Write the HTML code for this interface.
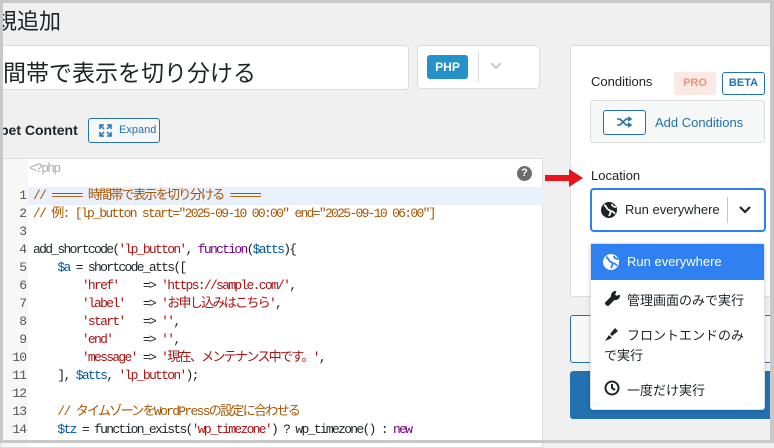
<!DOCTYPE html>
<html><head><meta charset="utf-8"><style>
*{box-sizing:border-box;margin:0;padding:0}
body{width:774px;height:443px;overflow:hidden;background:#f0f0f1;font-family:"Liberation Sans","Noto Sans CJK JP",sans-serif;position:relative;color:#1d2327}
.abs{position:absolute}
.frame{position:absolute;inset:0;border:3px solid #c8c8c8;border-right-width:4px;pointer-events:none;z-index:50}
.code{font-family:"Liberation Mono","Noto Sans CJK JP",monospace;font-size:13px;letter-spacing:-1.7px}
.ln{position:absolute;left:0;width:25px;height:18px;line-height:18px;text-align:right;color:#555;font-family:"Liberation Mono",monospace;font-size:13px;letter-spacing:-1px}
.cl{position:absolute;left:32px;height:18px;line-height:18px;white-space:pre}
.c{color:#aa5500}.s{color:#aa1111}.k{color:#770088}.v{color:#0055aa}
</style></head><body>
<div class="abs" style="left:-5px;top:4px;font-size:22px;">規追加</div>
<div class="abs" style="left:0;top:45px;width:409px;height:45px;background:#fff;border:1px solid #dcdcde;border-left:none;border-radius:0 4px 4px 0;font-size:23px;padding:8px 0 0 3px">間帯で表示を切り分ける</div>
<div class="abs" style="left:417px;top:45px;width:123px;height:44px;background:#fff;border:1px solid #dcdcde;border-radius:4px"></div>
<div class="abs" style="left:427px;top:55px;width:41px;height:24px;background:#2491c7;color:#fff;border-radius:3px;font-weight:bold;font-size:12px;text-align:center;line-height:24px">PHP</div>
<div class="abs" style="left:478px;top:52px;width:1px;height:30px;background:#dcdcde"></div>
<svg class="abs" style="left:490px;top:62px" width="12" height="8"><path d="M1 1l5 5 5-5" stroke="#c3c4c7" stroke-width="1.6" fill="none"/></svg>
<div class="abs" style="left:0;top:122px;font-size:14px;font-weight:bold;color:#1d2327">pet Content</div>
<div class="abs" style="left:88px;top:118px;width:72px;height:25px;border:1px solid #2271b1;border-radius:3px;background:#f6f7f7;font-size:11px;color:#2271b1;padding:5px 0 0 30px">Expand</div>
<svg class="abs" style="left:99px;top:124px" width="13" height="13" fill="none" stroke="#2271b1" stroke-width="1.5"><path d="M1 5V1h4M8 1h4v4M12 8v4H8M5 12H1V8M2 2l3 3M11 2L8 5M11 11L8 8M2 11l3-3"/></svg>
<div class="abs code" style="left:0;top:158px;width:543px;height:290px;background:#fff;border:1px solid #dcdcde">
<div class="abs" style="left:0;top:0;width:27px;height:100%;background:#f7f7f7"></div>
<div class="abs" style="left:27px;top:28px;width:515px;height:18px;background:#e8f0fc"></div>
<div class="abs" style="left:28px;top:1px;color:#aaa;line-height:18px">&lt;?php</div>
<div class="abs" style="left:516px;top:7px;width:15px;height:15px;border-radius:50%;background:#6d6d6d;color:#fff;font:bold 11px 'Liberation Sans';text-align:center;line-height:15px;letter-spacing:0">?</div>
<div style="position:absolute;left:0;top:28px">
<div class="ln" style="top:0">1</div><div class="cl c" style="top:0">// ===== 時間帯で表示を切り分ける =====</div>
<div class="ln" style="top:18px">2</div><div class="cl c" style="top:18px">// 例: [lp_button start="2025-09-10 00:00" end="2025-09-10 06:00"]</div>
<div class="ln" style="top:36px">3</div>
<div class="ln" style="top:54px">4</div><div class="cl" style="top:54px">add_shortcode(<span class="s">'lp_button'</span>, <span class="k">function</span>(<span class="v">$atts</span>){</div>
<div class="ln" style="top:72px">5</div><div class="cl" style="top:72px">    <span class="v">$a</span> = shortcode_atts([</div>
<div class="ln" style="top:90px">6</div><div class="cl" style="top:90px">        <span class="s">'href'</span>    =&gt; <span class="s">'https://sample.com/'</span>,</div>
<div class="ln" style="top:108px">7</div><div class="cl" style="top:108px">        <span class="s">'label'</span>   =&gt; <span class="s">'お申し込みはこちら'</span>,</div>
<div class="ln" style="top:126px">8</div><div class="cl" style="top:126px">        <span class="s">'start'</span>   =&gt; <span class="s">''</span>,</div>
<div class="ln" style="top:144px">9</div><div class="cl" style="top:144px">        <span class="s">'end'</span>     =&gt; <span class="s">''</span>,</div>
<div class="ln" style="top:162px">10</div><div class="cl" style="top:162px">        <span class="s">'message'</span> =&gt; <span class="s">'現在、メンテナンス中です。'</span>,</div>
<div class="ln" style="top:180px">11</div><div class="cl" style="top:180px">    ], <span class="v">$atts</span>, <span class="s">'lp_button'</span>);</div>
<div class="ln" style="top:198px">12</div>
<div class="ln" style="top:216px">13</div><div class="cl c" style="top:216px">    // タイムゾーンをWordPressの設定に合わせる</div>
<div class="ln" style="top:234px">14</div><div class="cl" style="top:234px">    <span class="v">$tz</span> = function_exists(<span class="s">'wp_timezone'</span>) ? wp_timezone() : <span class="k">new</span></div>
</div></div>
<div class="abs" style="left:570px;top:45px;width:205px;height:252px;background:#fff;border:1px solid #dcdcde;border-radius:3px"></div>
<svg class="abs" style="left:545px;top:168px;z-index:5" width="40" height="20"><path d="M0 7h24V1l14 9-14 9v-6H0z" fill="#e8141b"/></svg>
<div class="abs" style="left:591px;top:74px;font-size:13px">Conditions</div>
<div class="abs" style="left:674px;top:72px;width:42px;height:23px;background:#fbe9e5;color:#e8967c;font-size:11px;font-weight:bold;text-align:center;line-height:23px;border-radius:2px">PRO</div>
<div class="abs" style="left:722px;top:72px;width:43px;height:23px;border:1px solid #2271b1;color:#2271b1;font-size:11px;font-weight:bold;text-align:center;line-height:21px;border-radius:3px">BETA</div>
<div class="abs" style="left:590px;top:100px;width:175px;height:43px;background:#f6f7f7;border:1px solid #dcdcde;border-radius:3px"></div>
<div class="abs" style="left:603px;top:110px;width:43px;height:25px;border:1px solid #2271b1;border-radius:3px;background:#fff"></div>
<svg class="abs" style="left:617px;top:116px" width="15" height="12" fill="none" stroke="#2271b1" stroke-width="1.6"><path d="M0 3h3l6 6h5M0 9h3l6-6h5M11 1l3 2-3 2M11 7l3 2-3 2"/></svg>
<div class="abs" style="left:655px;top:115px;font-size:13px;color:#2271b1">Add Conditions</div>
<div class="abs" style="left:591px;top:168px;font-size:13px">Location</div>
<div class="abs" style="left:590px;top:188px;width:176px;height:44px;border:2px solid #2f7ff0;border-radius:4px;background:#fff"></div>
<svg class="abs" style="left:600px;top:201px" width="18" height="18"><circle cx="9" cy="9" r="8" fill="#1d2327"/><path d="M4 4c3 1 2 4 5 5s1 4 0 6M12 3c0 2 2 3 4 3M10 10c2 0 4 1 5 3" stroke="#fff" stroke-width="1.8" fill="none"/></svg>
<div class="abs" style="left:625px;top:202px;font-size:13px">Run everywhere</div>
<div class="abs" style="left:727px;top:197px;width:1px;height:26px;background:#c3c4c7"></div>
<svg class="abs" style="left:739px;top:206px" width="12" height="8"><path d="M1 1l5 5 5-5" stroke="#1d2327" stroke-width="2.2" fill="none"/></svg>
<div class="abs" style="left:570px;top:315px;width:205px;height:48px;border:1px solid #2271b1;border-radius:3px;background:#f6f7f7"></div>
<div class="abs" style="left:570px;top:371px;width:205px;height:48px;background:#2271b1;border-radius:3px"></div>
<div class="abs" style="left:590px;top:243px;width:175px;height:167px;background:#fff;border:1px solid #e0e0e0;border-radius:3px;box-shadow:0 1px 4px rgba(0,0,0,.15);font-size:13px">
<div style="position:absolute;left:0;top:0;width:100%;height:36px;background:#2f80f0"></div>
<svg class="abs" style="left:11px;top:9px" width="18" height="18"><circle cx="9" cy="9" r="8" fill="#fff"/><path d="M4 4c3 1 2 4 5 5s1 4 0 6M12 3c0 2 2 3 4 3M10 10c2 0 4 1 5 3" stroke="#2f80f0" stroke-width="1.8" fill="none"/></svg>
<div class="abs" style="left:36px;top:10px;color:#fff">Run everywhere</div>
<svg class="abs" style="left:13px;top:47px" width="16" height="16"><path d="M2 14l7-7M11 1a4 4 0 0 0-3 5l-6 6 2 2 6-6a4 4 0 0 0 5-3l-3 1-2-2z" stroke="#1d2327" stroke-width="2" fill="#1d2327"/></svg>
<div class="abs" style="left:36px;top:46px">管理画面のみで実行</div>
<svg class="abs" style="left:13px;top:82px" width="16" height="16"><path d="M1 15l4-6 3 3zM6 8l5-6 3 3-6 5z" fill="#1d2327"/></svg>
<div class="abs" style="left:36px;top:82px;width:130px;line-height:20px">フロントエンドのみ</div>
<div class="abs" style="left:13px;top:102px;line-height:20px">で実行</div>
<svg class="abs" style="left:13px;top:136px" width="16" height="16" fill="none" stroke="#1d2327" stroke-width="2"><circle cx="8" cy="8" r="6.5"/><path d="M8 4v4l3 2"/></svg>
<div class="abs" style="left:36px;top:136px">一度だけ実行</div>
</div>
<div class="frame"></div>
</body></html>
